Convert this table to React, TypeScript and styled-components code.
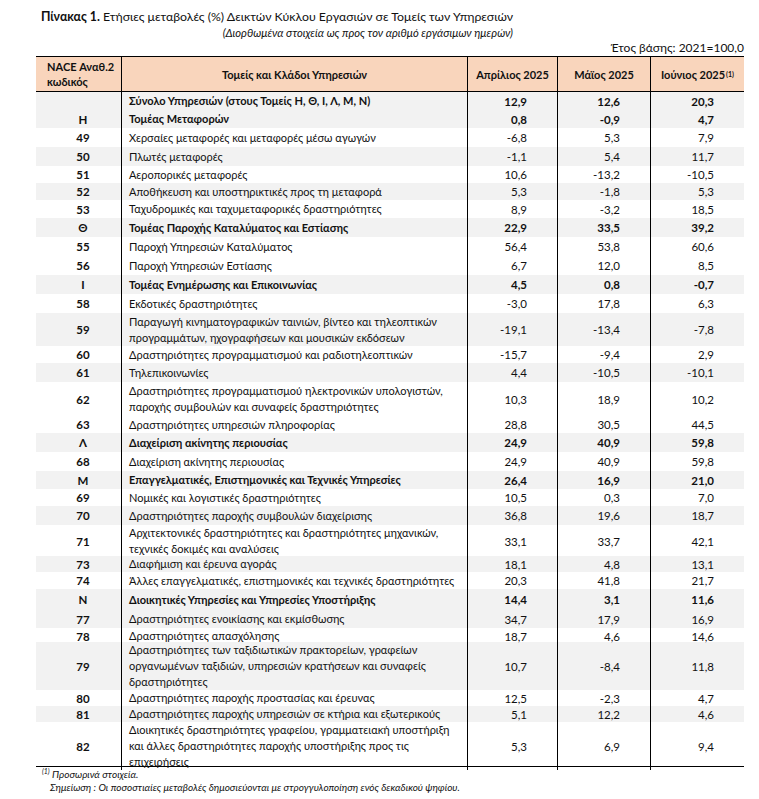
import React from "react";
import styled, { createGlobalStyle } from "styled-components";

type SectorRow = {
  code: string;
  label: string[];
  apr: string;
  may: string;
  jun: string;
  h: number;
  shade?: boolean;
  bold?: boolean;
};

const rows: SectorRow[] = [
  { code: "", label: ["Σύνολο Υπηρεσιών (στους Τομείς Η, Θ, Ι, Λ, Μ, Ν)"], apr: "12,9", may: "12,6", jun: "20,3", h: 18, shade: true, bold: true },
  { code: "Η", label: ["Τομέας Μεταφορών"], apr: "0,8", may: "-0,9", jun: "4,7", h: 18, shade: true, bold: true },
  { code: "49", label: ["Χερσαίες μεταφορές και μεταφορές μέσω αγωγών"], apr: "-6,8", may: "5,3", jun: "7,9", h: 19 },
  { code: "50", label: ["Πλωτές μεταφορές"], apr: "-1,1", may: "5,4", jun: "11,7", h: 19, shade: true },
  { code: "51", label: ["Αεροπορικές μεταφορές"], apr: "10,6", may: "-13,2", jun: "-10,5", h: 17 },
  { code: "52", label: ["Αποθήκευση και υποστηρικτικές προς τη μεταφορά"], apr: "5,3", may: "-1,8", jun: "5,3", h: 17, shade: true },
  { code: "53", label: ["Ταχυδρομικές και ταχυμεταφορικές δραστηριότητες"], apr: "8,9", may: "-3,2", jun: "18,5", h: 18 },
  { code: "Θ", label: ["Τομέας Παροχής Καταλύματος και Εστίασης"], apr: "22,9", may: "33,5", jun: "39,2", h: 19, shade: true, bold: true },
  { code: "55", label: ["Παροχή Υπηρεσιών Καταλύματος"], apr: "56,4", may: "53,8", jun: "60,6", h: 19 },
  { code: "56", label: ["Παροχή Υπηρεσιών Εστίασης"], apr: "6,7", may: "12,0", jun: "8,5", h: 19 },
  { code: "Ι", label: ["Τομέας Ενημέρωσης και Επικοινωνίας"], apr: "4,5", may: "0,8", jun: "-0,7", h: 19, shade: true, bold: true },
  { code: "58", label: ["Εκδοτικές δραστηριότητες"], apr: "-3,0", may: "17,8", jun: "6,3", h: 19 },
  { code: "59", label: ["Παραγωγή κινηματογραφικών ταινιών, βίντεο και τηλεοπτικών", "προγραμμάτων, ηχογραφήσεων και μουσικών εκδόσεων"], apr: "-19,1", may: "-13,4", jun: "-7,8", h: 33, shade: true },
  { code: "60", label: ["Δραστηριότητες προγραμματισμού και ραδιοτηλεοπτικών"], apr: "-15,7", may: "-9,4", jun: "2,9", h: 17 },
  { code: "61", label: ["Τηλεπικοινωνίες"], apr: "4,4", may: "-10,5", jun: "-10,1", h: 19, shade: true },
  { code: "62", label: ["Δραστηριότητες προγραμματισμού ηλεκτρονικών υπολογιστών,", "παροχής συμβουλών και συναφείς δραστηριότητες"], apr: "10,3", may: "18,9", jun: "10,2", h: 34 },
  { code: "63", label: ["Δραστηριότητες υπηρεσιών πληροφορίας"], apr: "28,8", may: "30,5", jun: "44,5", h: 17 },
  { code: "Λ", label: ["Διαχείριση ακίνητης περιουσίας"], apr: "24,9", may: "40,9", jun: "59,8", h: 19, shade: true, bold: true },
  { code: "68", label: ["Διαχείριση ακίνητης περιουσίας"], apr: "24,9", may: "40,9", jun: "59,8", h: 19 },
  { code: "Μ", label: ["Επαγγελματικές, Επιστημονικές και Τεχνικές Υπηρεσίες"], apr: "26,4", may: "16,9", jun: "21,0", h: 18, shade: true, bold: true },
  { code: "69", label: ["Νομικές και λογιστικές δραστηριότητες"], apr: "10,5", may: "0,3", jun: "7,0", h: 17 },
  { code: "70", label: ["Δραστηριότητες παροχής συμβουλών διαχείρισης"], apr: "36,8", may: "19,6", jun: "18,7", h: 19, shade: true },
  { code: "71", label: ["Αρχιτεκτονικές δραστηριότητες και δραστηριότητες μηχανικών,", "τεχνικές δοκιμές και αναλύσεις"], apr: "33,1", may: "33,7", jun: "42,1", h: 31 },
  { code: "73", label: ["Διαφήμιση και έρευνα αγοράς"], apr: "18,1", may: "4,8", jun: "13,1", h: 16, shade: true },
  { code: "74", label: ["Άλλες επαγγελματικές, επιστημονικές και τεχνικές δραστηριότητες"], apr: "20,3", may: "41,8", jun: "21,7", h: 17 },
  { code: "Ν", label: ["Διοικητικές Υπηρεσίες και Υπηρεσίες Υποστήριξης"], apr: "14,4", may: "3,1", jun: "11,6", h: 21, shade: true, bold: true },
  { code: "77", label: ["Δραστηριότητες ενοικίασης και εκμίσθωσης"], apr: "34,7", may: "17,9", jun: "16,9", h: 18, shade: true },
  { code: "78", label: ["Δραστηριότητες απασχόλησης"], apr: "18,7", may: "4,6", jun: "14,6", h: 14 },
  { code: "79", label: ["Δραστηριότητες των ταξιδιωτικών πρακτορείων, γραφείων", "οργανωμένων ταξιδιών, υπηρεσιών κρατήσεων και συναφείς", "δραστηριότητες"], apr: "10,7", may: "-8,4", jun: "11,8", h: 48, shade: true },
  { code: "80", label: ["Δραστηριότητες παροχής προστασίας και έρευνας"], apr: "12,5", may: "-2,3", jun: "4,7", h: 16 },
  { code: "81", label: ["Δραστηριότητες παροχής υπηρεσιών σε κτήρια και εξωτερικούς"], apr: "5,1", may: "12,2", jun: "4,6", h: 16, shade: true },
  { code: "82", label: ["Διοικητικές δραστηριότητες γραφείου, γραμματειακή υποστήριξη", "και άλλες δραστηριότητες παροχής υποστήριξης προς τις", "επιχειρήσεις"], apr: "5,3", may: "6,9", jun: "9,4", h: 44 },
];

const GlobalStyle = createGlobalStyle`
  body {
    margin: 0;
    background: #ffffff;
    color: #111111;
    font-family: Lato, "Open Sans", "Noto Sans", sans-serif;
  }
`;

const App: React.FC = () => {
  return (
    <Page>
      <GlobalStyle />
      <TitleBlock>
        <Title>
          <strong>Πίνακας 1.</strong> Ετήσιες μεταβολές (%) Δεικτών Κύκλου Εργασιών σε Τομείς των Υπηρεσιών
        </Title>
        <Subtitle>(Διορθωμένα στοιχεία ως προς τον αριθμό εργάσιμων ημερών)</Subtitle>
      </TitleBlock>
      <BaseYear>Έτος βάσης: 2021=100,0</BaseYear>
      <Table>
        <HeadRow>
          <HeadCell $align="left">
            NACE Αναθ.2
            <br />
            κωδικός
          </HeadCell>
          <HeadCell $divider>Τομείς και Κλάδοι Υπηρεσιών</HeadCell>
          <HeadCell $divider>Απρίλιος 2025</HeadCell>
          <HeadCell $divider>Μάϊος 2025</HeadCell>
          <HeadCell $divider>
            Ιούνιος 2025<Sup>(1)</Sup>
          </HeadCell>
        </HeadRow>
        {rows.map((r, i) => (
          <BodyRow key={i} $h={r.h} $shade={!!r.shade} $bold={!!r.bold}>
            <CodeCell>{r.code}</CodeCell>
            <DescCell>
              {r.label.map((line, j) => (
                <span key={j}>{line}</span>
              ))}
            </DescCell>
            <NumCell>{r.apr}</NumCell>
            <NumCell>{r.may}</NumCell>
            <NumCell>{r.jun}</NumCell>
          </BodyRow>
        ))}
      </Table>
      <Notes>
        <NoteLine>
          <Sup>(1)</Sup> Προσωρινά στοιχεία.
        </NoteLine>
        <NoteLine $indent>
          Σημείωση : Οι ποσοστιαίες μεταβολές δημοσιεύονται με στρογγυλοποίηση ενός δεκαδικού ψηφίου.
        </NoteLine>
      </Notes>
    </Page>
  );
};

const COLS = "85px 346px 90px 93px 94px";

const Page = styled.div`
  width: 759px;
  box-sizing: border-box;
  padding: 9px 15px 0 36px;
`;

const TitleBlock = styled.div`
  display: flex;
  flex-direction: column;
  align-items: flex-end;
  width: fit-content;
  margin-left: 5px;
`;

const Title = styled.div`
  font-size: 12.3px;
  line-height: 16px;
  white-space: nowrap;

  strong {
    font-weight: 700;
  }
`;

const Subtitle = styled.div`
  font-size: 11.2px;
  line-height: 16px;
  font-style: italic;
`;

const BaseYear = styled.div`
  text-align: right;
  font-size: 12px;
  line-height: 14px;
`;

const Table = styled.div`
  margin-top: 1px;
  width: 708px;
  border-bottom: 1px solid #000;
`;

const HeadRow = styled.div`
  display: grid;
  grid-template-columns: ${COLS};
  height: 36px;
  box-sizing: border-box;
  background: #f9d5bc;
  border-top: 1px solid #000;
  border-bottom: 1px solid #000;
`;

const HeadCell = styled.div<{ $align?: "left" | "center"; $divider?: boolean }>`
  display: flex;
  align-items: center;
  justify-content: ${(p) => (p.$align === "left" ? "flex-start" : "center")};
  text-align: ${(p) => p.$align || "center"};
  padding-left: ${(p) => (p.$align === "left" ? "11px" : "0")};
  border-left: ${(p) => (p.$divider ? "1px solid #000" : "none")};
  font-size: 11px;
  line-height: 15px;
  font-weight: 700;
`;

const Sup = styled.sup`
  font-size: 7px;
  line-height: 0;
  vertical-align: 4px;
  margin-left: 1px;
`;

const BodyRow = styled.div<{ $h: number; $shade: boolean; $bold: boolean }>`
  display: grid;
  grid-template-columns: ${COLS};
  height: ${(p) => p.$h}px;
  background: ${(p) => (p.$shade ? "#f2f2f2" : "#ffffff")};
  font-size: 11px;
  font-weight: ${(p) => (p.$bold ? 700 : 400)};
`;

const Cell = styled.div`
  display: flex;
  align-items: center;
  box-sizing: border-box;
  min-width: 0;
  white-space: nowrap;
`;

const CodeCell = styled(Cell)`
  justify-content: center;
  padding-left: 9px;
  font-weight: 700;
  font-size: 11.5px;
`;

const DescCell = styled(Cell)`
  flex-direction: column;
  align-items: flex-start;
  justify-content: center;
  padding-left: 7px;
  border-left: 1px solid #000;
  line-height: 16px;
`;

const NumCell = styled(Cell)`
  justify-content: flex-end;
  padding-right: 30px;
  border-left: 1px solid #000;
  font-size: 11.5px;
`;

const Notes = styled.div`
  padding-top: 1px;
  font-size: 10px;
  line-height: 13px;
  font-style: italic;
`;

const NoteLine = styled.div<{ $indent?: boolean }>`
  padding-left: ${(p) => (p.$indent ? "14px" : "5px")};
`;

export default App;
